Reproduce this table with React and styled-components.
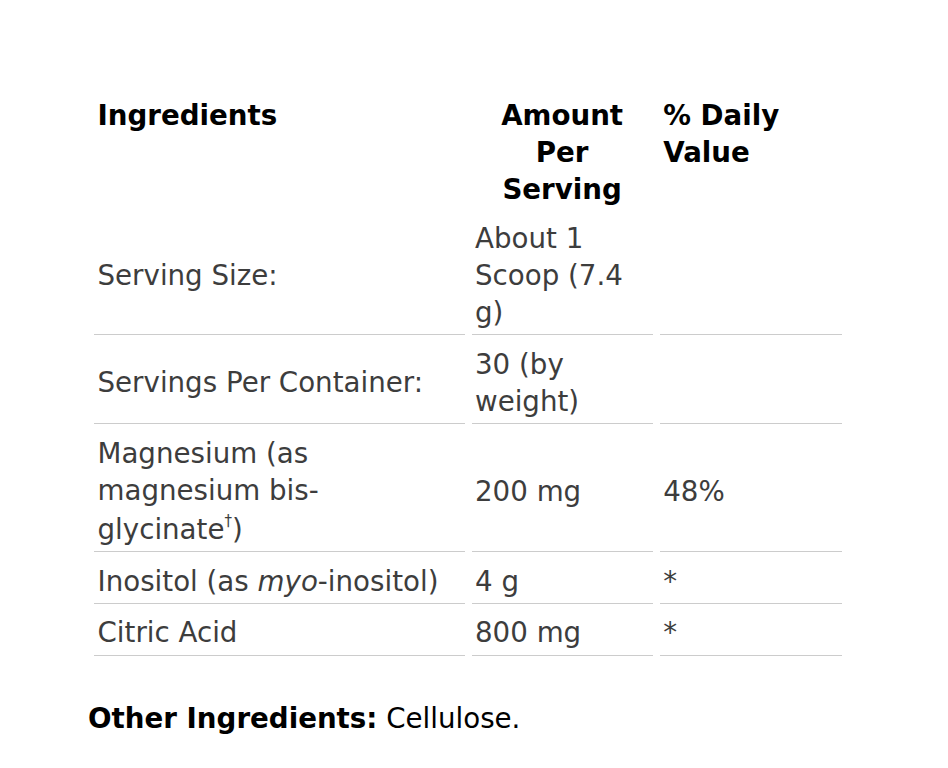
import React from "react";
import styled, { createGlobalStyle } from "styled-components";

const Global = createGlobalStyle`
  html, body { margin: 0; padding: 0; background: #fff; }
  body { font-family: "DejaVu Sans", "Liberation Sans", sans-serif; }
`;

const Page = styled.div`
  padding: 86px 0 0 87px;
  font-family: "DejaVu Sans", sans-serif;
  font-size: 27.7px;
  line-height: 37px;
`;

const Table = styled.table`
  width: 762px;
  border-collapse: separate;
  border-spacing: 7px;
  margin: 0;
`;

const Th = styled.th`
  color: #000;
  font-weight: bold;
  padding: 3.5px 3.5px 1.5px;
  vertical-align: top;
  text-align: ${(p) => p.$align || "left"};
  width: ${(p) => p.$w}px;
`;

const Td = styled.td`
  color: #3d3d3d;
  padding: ${(p) => (p.$tight ? "3.5px 3.5px 3px" : "3.5px")};
  vertical-align: middle;
  text-align: left;
  border-bottom: 1px solid #cccccc;
`;

const Sup = styled.sup`
  font-size: 15px;
  line-height: 24px;
  vertical-align: 13px;
`;

const Note = styled.p`
  margin: 37px 0 0 1px;
  color: #000;
`;

const rows = [
  ["Serving Size:", "About 1 Scoop (7.4 g)", ""],
  ["Servings Per Container:", "30 (by weight)", ""],
  [
    <>
      Magnesium (as magnesium bis-glycinate<Sup>†</Sup>)
    </>,
    "200 mg",
    "48%",
  ],
  [
    <>
      Inositol (as <em>myo</em>-inositol)
    </>,
    "4 g",
    "*",
  ],
  ["Citric Acid", "800 mg", "*"],
];

export default function App() {
  return (
    <Page>
      <Global />
      <Table>
        <thead>
          <tr>
            <Th $w={363}>Ingredients</Th>
            <Th $w={174} $align="center">
              Amount Per Serving
            </Th>
            <Th $w={175}>% Daily Value</Th>
          </tr>
        </thead>
        <tbody>
          {rows.map((r, i) => (
            <tr key={i}>
              <Td $tight={i === 3}>{r[0]}</Td>
              <Td $tight={i === 3}>{r[1]}</Td>
              <Td $tight={i === 3}>{r[2]}</Td>
            </tr>
          ))}
        </tbody>
      </Table>
      <Note>
        <b>Other Ingredients:</b> Cellulose.
      </Note>
    </Page>
  );
}
